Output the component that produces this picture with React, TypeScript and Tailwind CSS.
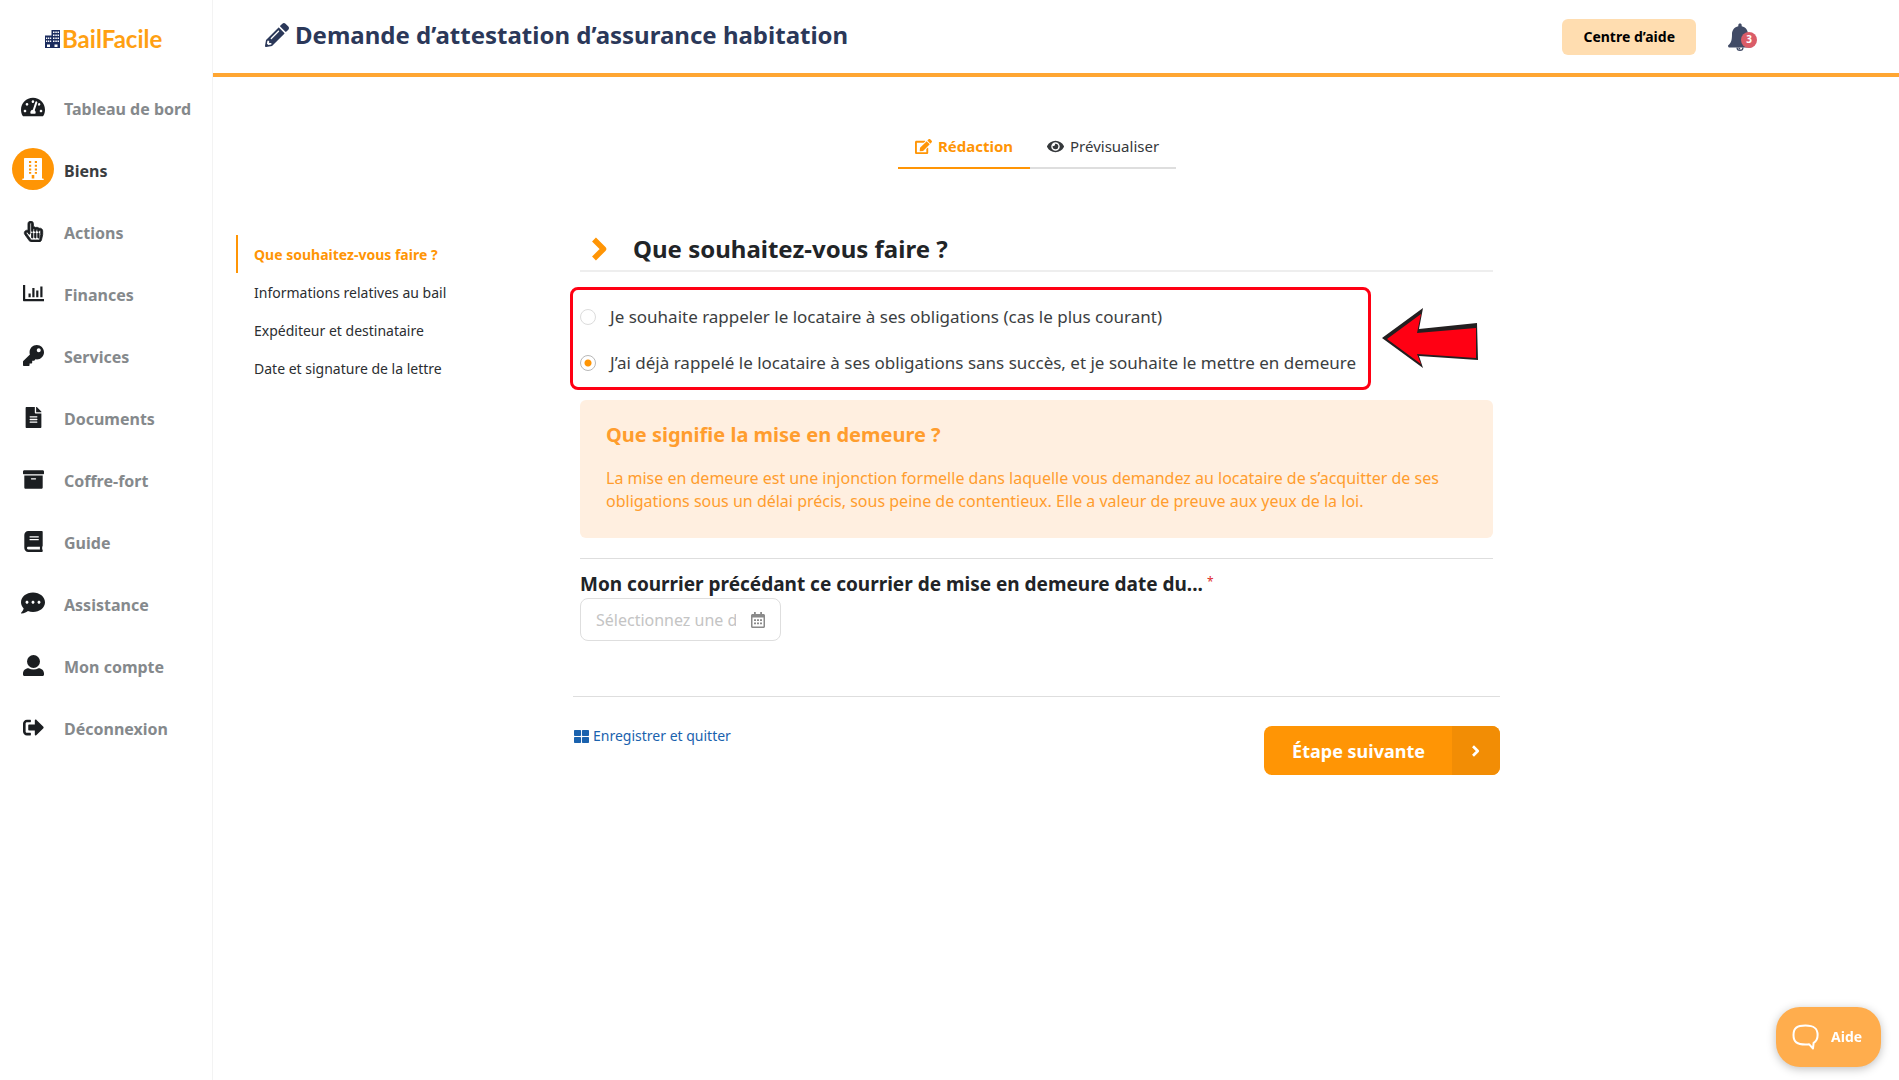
import { useState } from 'react';
import type { ComponentType } from 'react';
import {
    FaTachometerAlt, FaRegHandPointer, FaKey, FaFileAlt, FaArchive, FaBook,
    FaCommentDots, FaSignOutAlt, FaPencilAlt, FaEdit, FaEye, FaThLarge,
} from 'react-icons/fa';

interface IconProps {
    size?: number;
}

interface NavItem {
    label: string;
    icon: ComponentType<IconProps>;
    size: number;
    active?: boolean;
}

// ── Icons ─────────────────────────────────────────────────────────────────────

function BuildingIcon({ size = 22 }: IconProps) {
    return (
        <svg width={size} height={size} viewBox="0 0 22 22" fill="currentColor" fillRule="evenodd" aria-hidden="true">
            <path d="M3 0h16c.6 0 1 .4 1 1v19.500h1c.4 0 .7.300.7.700v.8H.3v-.8c0-.4.3-.7.700-.7h1V1c0-.6.400-1 1-1zM7 3v2h2.200V3zM12.800 3v2H15V3zM7 6.700v2h2.200v-2zM12.800 6.700v2H15v-2zM7 10.400v2h2.200v-2zM12.800 10.400v2H15v-2zM7 14.100v1.600h2.200v-1.600zM12.800 14.100v1.600H15v-1.600zM9.700 17v3.500h2.600V17z" />
        </svg>
    );
}

function ChartIcon({ size = 21 }: IconProps) {
    return (
        <svg width={size} height={size} viewBox="0 0 21 21" fill="currentColor" aria-hidden="true">
            <path d="M0 2h2.200v14H21v2.200H1c-.6 0-1-.4-1-1zM5.500 10.500h2.200v3.700H5.500zM9.300 5h2.200v9.200H9.300zM13.200 7.500h2.200v6.700h-2.200zM17.300 3.500h2.200v10.700h-2.200z" />
        </svg>
    );
}

function PointerIcon({ size = 21 }: IconProps) {
    return <FaRegHandPointer size={size} strokeWidth={20} />;
}

function UserIcon({ size = 21 }: IconProps) {
    return (
        <svg width={size} height={size} viewBox="0 0 21 21" fill="currentColor" aria-hidden="true">
            <circle cx="10.500" cy="6.500" r="6.500" />
            <path d="M5.500 13.300c3 1.600 7 1.600 10 0 3.200 0 5.500 2.300 5.500 5.200v1c0 .9-.6 1.500-1.500 1.500h-18C.6 21 0 20.400 0 19.500v-1c0-2.900 2.300-5.200 5.500-5.200z" />
        </svg>
    );
}

function Chevron({ size = 24 }: IconProps) {
    return (
        <svg width={size} height={size} viewBox="0 0 24 24" fill="none" stroke="currentColor" strokeWidth="5.500" aria-hidden="true">
            <path d="m6 2.500 9.500 9.500L6 21.500" strokeLinejoin="round" />
        </svg>
    );
}

function CalendarIcon() {
    return (
        <svg width="14" height="16" viewBox="0 0 14 16" className="ml-[15px] shrink-0 text-[#8a8a8a]" aria-hidden="true">
            <path
                fill="currentColor"
                fillRule="evenodd"
                d="M3 0h1.800v2h4.400V0H11v2h1.500c.8 0 1.500.700 1.500 1.500v11c0 .8-.7 1.500-1.500 1.500h-11C.7 16 0 15.300 0 14.500v-11C0 2.700.7 2 1.500 2H3zM1.500 5.500v9h11v-9zM3 7.300h2v1.800H3zM6 7.300h2v1.800H6zM9 7.300h2v1.800H9zM3 10.500h2v1.800H3zM6 10.500h2v1.800H6zM9 10.500h2v1.800H9z"
            />
        </svg>
    );
}

function LogoMark() {
    return (
        <svg width="15" height="18" viewBox="0 0 15 18" aria-hidden="true">
            <path fill="#1b2c5e" d="M6.500 0H15v18H0V5.500h6.500z" />
            <path
                fill="#fff"
                d="M8 1.500h1.500V3H8zM10.300 1.500h1.500V3h-1.500zM12.500 1.500H14V3h-1.500zM8 4.500h1.500V6H8zM10.300 4.500h1.500V6h-1.500zM12.500 4.500H14V6h-1.500zM8 7.500h1.500V9H8zM10.300 7.500h1.500V9h-1.500zM12.500 7.500H14V9h-1.500zM8 10.500h1.500V12H8zM10.300 10.500h1.500V12h-1.500zM12.500 10.500H14V12h-1.500zM1 7.500h1.300V9H1zM3 7.500h1.300V9H3zM5 7.500h1.200V9H5zM1 10.500h1.300V12H1zM3 10.500h1.300V12H3zM5 10.500h1.200V12H5zM2 14.500h3V17H2zM9.500 14.500h3V17h-3z"
            />
        </svg>
    );
}

function BellIcon() {
    return (
        <svg width="24" height="28" viewBox="0 0 24 28" aria-hidden="true">
            <path
                fill="#414b66"
                d="M12 .5c1 0 1.700.700 1.700 1.700v1c4 .9 6.300 4 6.300 8 0 6.300 1 8.800 3.800 11 .5 1.200-.2 2.300-1.300 2.300H1.500C.4 24.500-.3 23.400.2 22.200 3 20 4 17.500 4 11.200c0-4 2.300-7.100 6.300-8v-1C10.300 1.200 11 .5 12 .5z"
            />
            <path fill="none" stroke="#414b66" strokeWidth="1.200" d="M9 24.500a3 2.900 0 0 0 6 0M10.800 24.500c0 .8.500 1.300 1.400 1.300" />
        </svg>
    );
}

function PointerArrow() {
    return (
        <svg width="97" height="61" viewBox="0 0 97 61" className="ml-[11px] shrink-0" aria-hidden="true">
            <path fill="#231f20" d="M0 30 41 0 37 21 95 15 96 52 37 48 41 60z" />
            <path fill="#ff0013" d="M5 31 39 6 35 25 94 20 94 50 35 46 39 56z" />
        </svg>
    );
}

// ── Data ──────────────────────────────────────────────────────────────────────

const NAV_ITEMS: NavItem[] = [
    { label: 'Tableau de bord', icon: FaTachometerAlt, size: 24 },
    { label: 'Biens', icon: BuildingIcon, size: 22, active: true },
    { label: 'Actions', icon: PointerIcon, size: 21 },
    { label: 'Finances', icon: ChartIcon, size: 21 },
    { label: 'Services', icon: FaKey, size: 21 },
    { label: 'Documents', icon: FaFileAlt, size: 21 },
    { label: 'Coffre-fort', icon: FaArchive, size: 21 },
    { label: 'Guide', icon: FaBook, size: 21 },
    { label: 'Assistance', icon: FaCommentDots, size: 24 },
    { label: 'Mon compte', icon: UserIcon, size: 21 },
    { label: 'Déconnexion', icon: FaSignOutAlt, size: 21 },
];

const STEPS = [
    'Que souhaitez-vous faire ?',
    'Informations relatives au bail',
    'Expéditeur et destinataire',
    'Date et signature de la lettre',
];

const CHOICES = [
    { id: 'rappel', label: 'Je souhaite rappeler le locataire à ses obligations (cas le plus courant)' },
    { id: 'demeure', label: 'J’ai déjà rappelé le locataire à ses obligations sans succès, et je souhaite le mettre en demeure' },
];

// ── Layout ────────────────────────────────────────────────────────────────────

function Sidebar() {
    return (
        <aside className="w-[213px] shrink-0 border-r border-[#f3f3f3]">
            <a href="#" className="flex items-center pl-[45px] pt-6 h-[54px]">
                <LogoMark />
                <span className="ml-[2px] font-[Lato] font-bold text-2xl leading-8 text-[#ffa012]">BailFacile</span>
            </a>
            <nav className="mt-6">
                {NAV_ITEMS.map(item => (
                    <a key={item.label} href="#" className="flex items-center h-[62px] pl-3">
                        <span
                            className={
                                item.active
                                    ? 'flex items-center justify-center size-[42px] mb-1 rounded-full bg-[#ff9505] text-white'
                                    : 'flex items-center justify-center size-[42px] pb-1 text-[#1b1e21]'
                            }
                        >
                            <item.icon size={item.size} />
                        </span>
                        <span
                            className={
                                item.active
                                    ? 'ml-[10px] text-base font-bold text-[#3a3d40]'
                                    : 'ml-[10px] text-base font-bold text-[#85898c]'
                            }
                        >
                            {item.label}
                        </span>
                    </a>
                ))}
            </nav>
        </aside>
    );
}

function Header() {
    return (
        <header className="flex items-center h-[77px] border-b-4 border-[#ffa632] pl-[52px] pr-[147px]">
            <FaPencilAlt size={24} className="mb-1 text-[#2b3859]" />
            <h1 className="ml-[6px] mb-1 text-2xl font-bold text-[#2b3859]">Demande d’attestation d’assurance habitation</h1>
            <button type="button" className="ml-auto h-9 px-[21px] rounded-md bg-[#ffddb0] text-sm font-bold text-black">
                Centre d’aide
            </button>
            <button type="button" aria-label="Notifications" className="relative ml-8">
                <BellIcon />
                <span className="absolute left-[13px] top-[9px] flex items-center justify-center size-4 rounded-full bg-[#da5c68] text-[10px] font-bold text-white">
                    3
                </span>
            </button>
        </header>
    );
}

function Tabs() {
    return (
        <div role="tablist" className="flex justify-center">
            <button
                role="tab"
                aria-selected="true"
                className="flex items-center gap-[6px] h-11 px-[17px] border-b-2 border-[#ff9505] text-[15px] font-bold text-[#ff9505]"
            >
                <FaEdit size={17} /> Rédaction
            </button>
            <button
                role="tab"
                aria-selected="false"
                className="flex items-center gap-[6px] h-11 px-[17px] border-b-2 border-[#dedede] text-[15px] text-[#35383b]"
            >
                <FaEye size={17} /> Prévisualiser
            </button>
        </div>
    );
}

export default function App() {
    const [choice, setChoice] = useState('demeure');

    return (
        <div className="flex min-h-screen bg-white font-['Noto_Sans',sans-serif] text-[#212427]">
            <Sidebar />
            <div className="flex-1 min-w-0">
                <Header />
                <div className="pl-[23px] pr-[61px] pt-12">
                    <Tabs />
                    <div className="flex mt-[66px]">
                        <nav className="w-[337px] shrink-0 text-sm">
                            {STEPS.map((step, i) => (
                                <a
                                    key={step}
                                    href="#"
                                    className={
                                        i === 0
                                            ? 'flex items-center h-[38px] pl-4 pt-px border-l-2 border-[#ff9505] font-bold text-[#ff9505]'
                                            : 'flex items-center h-[38px] pl-[18px] pt-px text-[#2b2e31]'
                                    }
                                >
                                    {step}
                                </a>
                            ))}
                        </nav>

                        <form className="flex-1 max-w-[927px]" onSubmit={e => e.preventDefault()}>
                            <div className="px-[7px]">
                                <div className="flex items-center h-[37px] pb-2 pl-2 border-b-2 border-[#eee]">
                                    <span className="text-[#ff9505]">
                                        <Chevron />
                                    </span>
                                    <h2 className="ml-[21px] text-2xl font-bold">Que souhaitez-vous faire ?</h2>
                                </div>

                                {/* Choice of the letter type */}
                                <div className="flex items-center mt-[15px] -ml-[10px]">
                                    <fieldset className="flex flex-col justify-center h-[103px] pt-[2px] pl-[7px] pr-3 border-[3px] border-[#ff0013] rounded-lg">
                                        {CHOICES.map(c => (
                                            <label key={c.id} className="flex items-center h-[46px] text-[17px] text-[#3b3e41]">
                                                <input
                                                    type="radio"
                                                    name="choice"
                                                    checked={choice === c.id}
                                                    onChange={() => setChoice(c.id)}
                                                    className="appearance-none size-4 mr-[14px] rounded-full border border-[#dcdcdc] checked:border-[#b8b8b8] checked:bg-[radial-gradient(circle,#ff9505_3px,transparent_4px)]"
                                                />
                                                {c.label}
                                            </label>
                                        ))}
                                    </fieldset>
                                    <PointerArrow />
                                </div>

                                <section className="mt-[10px] px-[26px] pt-[21px] pb-[25px] rounded-md bg-[#ffefe0] text-[#ff9d2e]">
                                    <h3 className="text-xl leading-7 font-bold">Que signifie la mise en demeure ?</h3>
                                    <p className="mt-[18px] text-base leading-[23px]">
                                        La mise en demeure est une injonction formelle dans laquelle vous demandez au locataire de s’acquitter de ses
                                        obligations sous un délai précis, sous peine de contentieux. Elle a valeur de preuve aux yeux de la loi.
                                    </p>
                                </section>

                                <div className="mt-5 pt-[11px] border-t border-[#dedede]">
                                    <label htmlFor="letter-date" className="flex text-[19px] leading-7 font-bold">
                                        Mon courrier précédant ce courrier de mise en demeure date du...
                                        <span className="ml-1 text-xs leading-6 font-normal text-[#e02b2b]">*</span>
                                    </label>
                                    <div className="flex items-center w-[201px] h-[43px] px-[15px] border border-[#dedede] rounded-lg">
                                        <input
                                            id="letter-date"
                                            type="text"
                                            placeholder="Sélectionnez une date"
                                            className="w-[142px] min-w-0 text-base outline-none placeholder:text-[#c4c4c4]"
                                        />
                                        <CalendarIcon />
                                    </div>
                                </div>
                            </div>

                            <div className="flex items-start justify-between mt-[55px] pt-[29px] border-t border-[#dedede]">
                                <a href="#" className="flex items-center gap-1 pl-px text-sm text-[#1a62ae]">
                                    <FaThLarge size={15} /> Enregistrer et quitter
                                </a>
                                <button type="submit" className="flex h-[49px] rounded-lg bg-[#ff9505] text-lg font-bold text-white overflow-hidden">
                                    <span className="self-center pl-7 pr-[27px]">Étape suivante</span>
                                    <span className="flex items-center justify-center w-12 h-full bg-[#f28d05]">
                                        <Chevron size={12} />
                                    </span>
                                </button>
                            </div>
                        </form>
                    </div>
                </div>
            </div>

            {/* Support chat launcher */}
            <button
                type="button"
                className="fixed right-[18px] bottom-[13px] flex items-center h-[60px] w-[105px] pl-4 gap-3 rounded-[24px] bg-[#ffad4d] text-sm font-bold text-white shadow-[0_2px_10px_rgba(0,0,0,0.25)]"
            >
                <svg width="27" height="26" viewBox="0 0 27 26" fill="none" stroke="#fff" strokeWidth="2" strokeLinejoin="round" aria-hidden="true">
                    <path d="M13.500 1.500C5 1.500 1.500 4 1.500 11s3.500 9.500 12 9.500c1.300 0 2.600 0 3.700-.2L21 24.500l.6-5.700c2.800-1.400 4-4 4-7.800 0-7-3.600-9.500-12.100-9.500z" />
                </svg>
                <span className="font-['Open_Sans']">Aide</span>
            </button>
        </div>
    );
}
